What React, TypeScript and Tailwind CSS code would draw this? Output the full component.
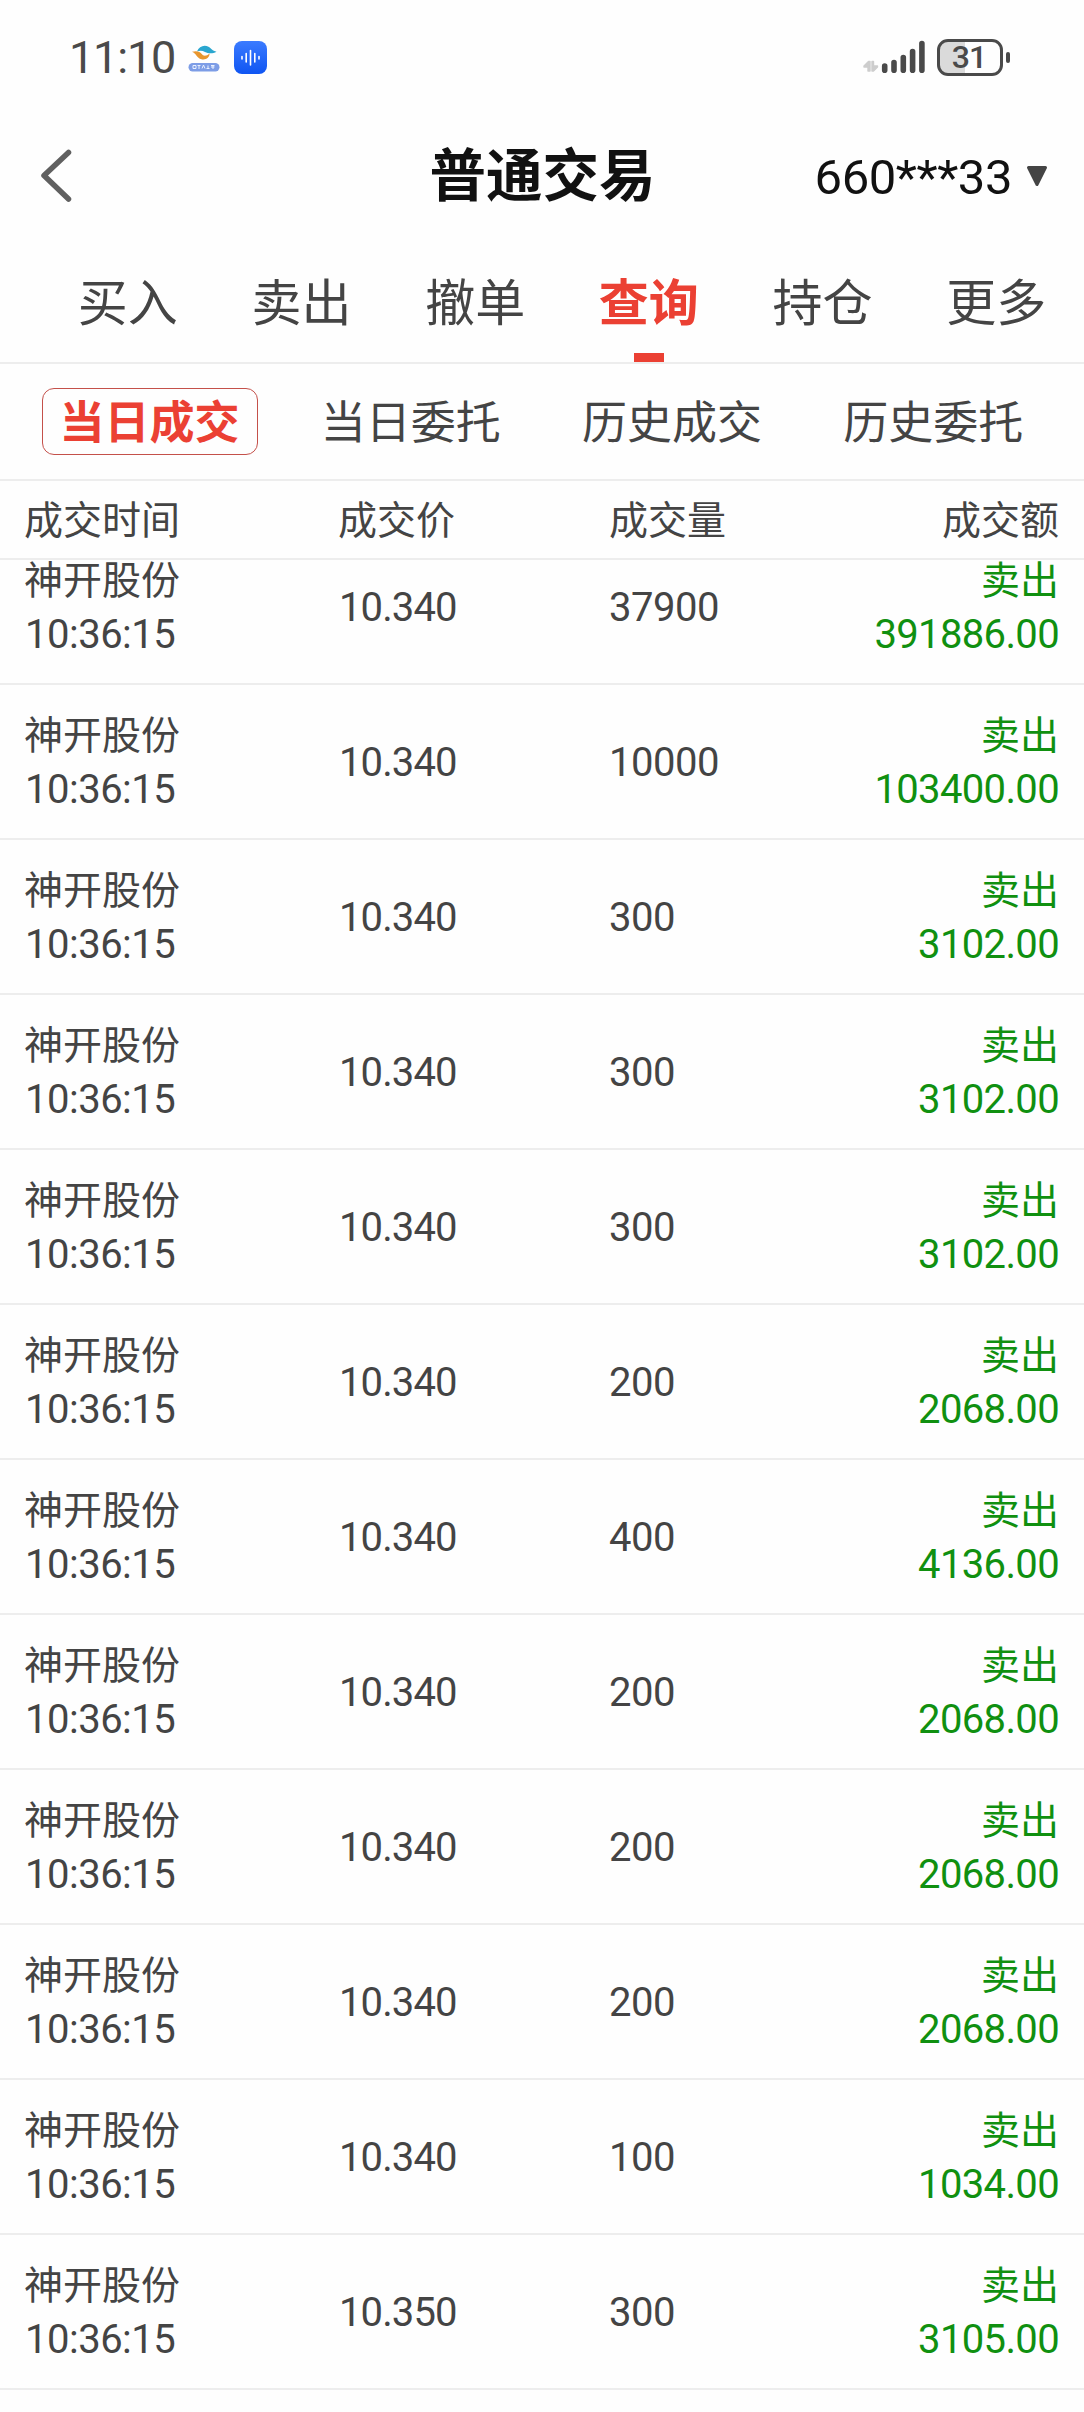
import React from "react";

type Trade = { price: string; volume: string; amount: string };

const STOCK = "神开股份";
const TIME = "10:36:15";

const trades: Trade[] = [
  { price: "10.340", volume: "37900", amount: "391886.00" },
  { price: "10.340", volume: "10000", amount: "103400.00" },
  { price: "10.340", volume: "300", amount: "3102.00" },
  { price: "10.340", volume: "300", amount: "3102.00" },
  { price: "10.340", volume: "300", amount: "3102.00" },
  { price: "10.340", volume: "200", amount: "2068.00" },
  { price: "10.340", volume: "400", amount: "4136.00" },
  { price: "10.340", volume: "200", amount: "2068.00" },
  { price: "10.340", volume: "200", amount: "2068.00" },
  { price: "10.340", volume: "200", amount: "2068.00" },
  { price: "10.340", volume: "100", amount: "1034.00" },
  { price: "10.350", volume: "300", amount: "3105.00" },
];

const tabs = ["买入", "卖出", "撤单", "查询", "持仓", "更多"];
const subTabs = ["当日成交", "当日委托", "历史成交", "历史委托"];

function WeatherLogo() {
  return (
    <svg className="ml-[13px] mt-[5px]" width="33" height="30" viewBox="0 0 33 30">
      <path d="M9 6.500C11 1.500 16-.5 20.500 1.800c2.500 1.500 4 4.200 8 5-4 2.200-8.500 1.700-11.500.2C14.500 5.700 12 5.500 9 6.500Z" fill="#2aa6cf" />
      <path d="M4 6.800c4.500-1.500 8-.3 9.500 2 1.800 2.700 5 2.600 8-.3.300 3.800-3.500 6.800-8 5.800C8.500 13.200 8.500 8.500 4 6.800Z" fill="#e8962e" />
      <rect x="0.500" y="18" width="31" height="8.500" rx="4.200" fill="#7d9de6" />
      <path d="M5 20.500h3v3H5zM9.500 20.500h3M11 20v4M14 23.500l1.500-3.500 1.500 3.500M18.500 23.500h3M20 20.500v3M23 20.500h3.500M23 22h3.500M25 20v4" stroke="#e8efff" strokeWidth="1" fill="none" />
    </svg>
  );
}

function VoiceIcon() {
  return (
    <svg className="ml-[13px]" width="33" height="33" viewBox="0 0 33 33">
      <defs>
        <linearGradient id="voice" x1="0" y1="0" x2="0" y2="1">
          <stop offset="0" stopColor="#3b7bff" />
          <stop offset="1" stopColor="#0f55f2" />
        </linearGradient>
      </defs>
      <rect width="33" height="33" rx="8" fill="url(#voice)" />
      <path d="M8 15.500v2.500M12.200 12.500v8.500M16.500 9.500v14.500M20.800 12.500v8.500M25 15.500v2.500" stroke="#fff" strokeWidth="1.600" strokeLinecap="round" />
    </svg>
  );
}

function Signal() {
  return (
    <svg width="63" height="36" viewBox="0 0 63 36">
      <path d="M5.500 22.500h1.500V32H5V28H1V27ZM9 22.500h1.500V27H14.500V28L10.500 32H9Z" fill="#cdcdcd" stroke="#cdcdcd" strokeWidth="1.400" strokeLinejoin="round" />
      <path d="M21.700 27v4.200M31 23.500v7.700M40.300 18.500v12.700M49.600 12.500v18.700M58.900 4.500v26.700" stroke="#4a4a4a" strokeWidth="5.600" strokeLinecap="round" />
    </svg>
  );
}

function StatusBar() {
  return (
    <div className="flex h-[114px] items-center justify-between pl-[69px] pr-[74px] text-[#4a4a4a]">
      <div className="flex items-center">
        <span className="w-[106px] whitespace-nowrap text-[45px] font-[450] leading-none tracking-[-1.200px]">11:10</span>
        <WeatherLogo />
        <VoiceIcon />
      </div>
      <div className="flex items-center">
        <Signal />
        <div className="ml-[11px] flex h-[37px] w-[66px] items-center justify-center rounded-[11px] border-[3px] border-[#4a4a4a] bg-[linear-gradient(90deg,#dadada_42%,transparent_42%)] pr-[2px] text-[32px] font-[550] leading-none tracking-[-1px]">
          31
        </div>
        <div className="ml-[3px] h-[11px] w-1 rounded-full bg-[#4a4a4a]" />
      </div>
    </div>
  );
}

function TitleBar() {
  return (
    <header className="grid h-[124px] grid-cols-[1fr_auto_1fr] items-center pl-[37px] pr-[36px]">
      <svg className="ml-[2px]" width="34" height="56" viewBox="0 0 34 56">
        <path d="M29.500 4.500L5 27.500 29.500 51" stroke="#606060" strokeWidth="5.500" fill="none" strokeLinecap="round" strokeLinejoin="round" />
      </svg>
      <h1 className="pt-[3px] text-[56.5px] font-bold leading-none text-[#111]">普通交易</h1>
      <div className="flex items-center justify-end text-[#111]">
        <span className="pt-[2px] text-[49px] leading-none tracking-[-0.450px]">660***33</span>
        <svg className="ml-[14px]" width="22" height="22" viewBox="0 0 22 22">
          <path d="M2.500 2.500h17L11 19.500Z" fill="#444" stroke="#444" strokeWidth="3" strokeLinejoin="round" />
        </svg>
      </div>
    </header>
  );
}

function Tabs() {
  return (
    <nav className="flex h-[126px] border-b-2 border-[#ededed] pl-[41px] pr-px">
      {tabs.map((t) => {
        const on = t === "查询";
        return (
          <div key={t} className="flex flex-1 flex-col items-center justify-between">
            <span className={on ? "mt-[41px] text-[50px] font-bold leading-[50px] text-[#eb4033]" : "mt-[41px] text-[50px] leading-[50px] text-[#444]"}>{t}</span>
            {on && <span className="h-[9px] w-[30px] bg-[#eb4033]" />}
          </div>
        );
      })}
    </nav>
  );
}

function SubTabs() {
  return (
    <nav className="flex h-[117px] items-center border-b-2 border-[#ededed] pl-[19px] pr-[20px]">
      {subTabs.map((t, i) => (
        <div key={t} className="flex flex-1 justify-center">
          <span
            className={
              i === 0
                ? "flex h-[67px] w-[216px] items-center justify-center rounded-[12px] border border-[#c4504a] pt-[3px] text-[45px] font-bold leading-none text-[#eb4033]"
                : "flex h-[67px] w-[216px] items-center justify-center pt-[3px] text-[45px] leading-none text-[#444]"
            }
          >
            {t}
          </span>
        </div>
      ))}
    </nav>
  );
}

function TradeRow({ price, volume, amount }: Trade) {
  return (
    <div className="grid h-[155px] grid-cols-[314px_271px_1fr] items-center border-b-2 border-[#ededed] pl-[24px] pr-[25px] pt-[3px] text-[39px] leading-[53px]">
      <div className="flex flex-col">
        <div className="my-[7px] leading-[39px]">{STOCK}</div>
        <div className="pl-px text-[40px] tracking-[-0.500px]">{TIME}</div>
      </div>
      <div className="pb-[2px] pl-px text-[40px] tracking-[-0.900px]">{price}</div>
      <div className="flex items-center justify-between">
        <span className="pb-[2px] text-[40px] tracking-[-0.500px]">{volume}</span>
        <div className="flex flex-col text-right text-[#109010]">
          <div className="my-[7px] leading-[39px]">卖出</div>
          <div className="text-[40px] tracking-[-0.650px]">{amount}</div>
        </div>
      </div>
    </div>
  );
}

export default function App() {
  return (
    <div className="flex h-[2412px] w-[1084px] flex-col overflow-hidden bg-[#fefefe] font-[Roboto,'Noto_Sans_CJK_SC',sans-serif] text-[#444]">
      <StatusBar />
      <TitleBar />
      <Tabs />
      <SubTabs />
      <div className="grid h-[79px] shrink-0 grid-cols-[314px_271px_1fr] items-center border-b-2 border-[#ededed] pl-[24px] pr-[25px] pt-[3px] text-[39px] leading-none">
        <span>成交时间</span>
        <span>成交价</span>
        <span className="flex justify-between">
          <span>成交量</span>
          <span>成交额</span>
        </span>
      </div>
      <main className="min-h-0 flex-1 overflow-hidden">
        <div className="-mt-[30px]">
          {trades.map((t, i) => (
            <TradeRow key={i} {...t} />
          ))}
        </div>
      </main>
    </div>
  );
}
